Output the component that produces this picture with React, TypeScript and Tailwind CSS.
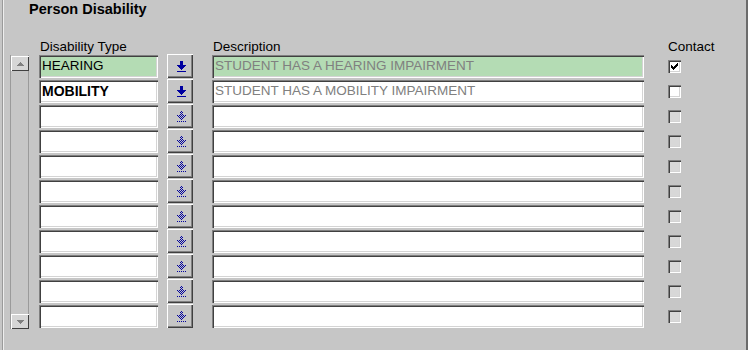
import React from "react";

const FONT = { fontFamily: '"Liberation Sans", Arial, sans-serif' };

const ARROW_ROWS: [number, number][] = [
  [3, 3],
  [3, 3],
  [3, 3],
  [3, 3],
  [0, 9],
  [1, 7],
  [2, 5],
  [3, 3],
  [4, 1],
  [0, 0],
  [0, 9],
];

function Arrow({ disabled }: { disabled: boolean }) {
  const cells: React.ReactNode[] = [];
  ARROW_ROWS.forEach(([x0, w], y) => {
    if (!disabled) {
      if (w > 0) cells.push(<rect key={y} x={x0} y={y} width={w} height={1} fill="#0000a0" />);
    } else {
      for (let x = x0; x < x0 + w; x++) {
        if ((x + y) % 2 === 0) cells.push(<rect key={`${x}-${y}`} x={x} y={y} width={1} height={1} fill="#0000a0" />);
      }
    }
  });
  return (
    <svg width="9" height="11" viewBox="0 0 9 11" shapeRendering="crispEdges">
      {cells}
    </svg>
  );
}

function Check() {
  return (
    <svg width="7" height="7" viewBox="0 0 7 7" shapeRendering="crispEdges">
      <path
        d="M6 0h1v3h-1v1h-1v1h-1v1h-1v1h-1v-1h-1v-1h-1v-3h1v1h1v1h1v-1h1v-1h1z"
        fill="#000"
      />
    </svg>
  );
}

type Row = {
  type: string;
  desc: string;
  checked: boolean;
  active: boolean;
  bold?: boolean;
  green?: boolean;
};

const rows: Row[] = [
  { type: "HEARING", desc: "STUDENT HAS A HEARING IMPAIRMENT", checked: true, active: true, green: true },
  { type: "MOBILITY", desc: "STUDENT HAS A MOBILITY IMPAIRMENT", checked: false, active: true, bold: true },
  ...Array.from({ length: 9 }, () => ({ type: "", desc: "", checked: false, active: false })),
];

const sunken =
  "shadow-[inset_1px_1px_0_#808080,inset_2px_2px_0_#404040,inset_-1px_-1px_0_#ffffff,inset_-2px_-2px_0_#d4d4d4]";

function ScrollBtn({ up }: { up: boolean }) {
  return (
    <div className="h-[15px] w-[18px] bg-[#d6d6d6] shadow-[inset_1px_1px_0_#ffffff,inset_-1px_-1px_0_#404040] flex items-center justify-center">
      <svg width="7" height="4" viewBox="0 0 7 4" shapeRendering="crispEdges">
        {up ? (
          <path d="M3 0h1v1h1v1h1v1h1v1h-7v-1h1v-1h1v-1h1z" fill="#808080" />
        ) : (
          <path d="M0 0h7v1h-1v1h-1v1h-1v1h-1v-1h-1v-1h-1v-1h-1z" fill="#808080" />
        )}
      </svg>
    </div>
  );
}

export default function App() {
  return (
    <div
      className="w-[748px] h-[350px] bg-[#c6c6c6] border-r-2 border-r-[#6b6b6b] overflow-hidden text-black"
      style={FONT}
    >
      <div className="ml-[2px] h-full border-l border-l-[#9a9a9a] shadow-[inset_1px_0_0_#eeeeee]">
        <div className="pl-[26px] pt-[1px] text-[14.5px] font-bold leading-[16px]">Person Disability</div>

        <div className="mt-[22px] flex text-[13.5px] leading-[15px]">
          <div className="ml-[37px] w-[173px]">Disability Type</div>
          <div className="w-[455px]">Description</div>
          <div>Contact</div>
        </div>

        <div className="flex">
          <div className="ml-[7px] mt-[1px] w-[19px] h-[274px] border-x border-x-[#9a9a9a] flex flex-col justify-between">
            <div className="mt-[1px]">
              <ScrollBtn up />
            </div>
            <div>
              <ScrollBtn up={false} />
            </div>
          </div>

          <div className="ml-[10px] flex flex-col">
            {rows.map((r, i) => (
              <div key={i} className="flex h-[25px] items-start">
                <div
                  className={`mt-[1px] h-[23px] w-[119px] ${r.green ? "bg-[#b4dcb4]" : "bg-white"} ${sunken} pl-[3px] flex items-center ${r.bold ? "font-bold text-[14px]" : "text-[13.5px]"}`}
                >
                  {r.type}
                </div>
                <div className="ml-[9px] h-[24px] w-[26px] bg-[#c6c6c6] shadow-[inset_1px_1px_0_#ffffff,inset_-1px_-1px_0_#404040,inset_-2px_-2px_0_#808080] flex justify-start pl-[10px] pt-[7px]">
                  <Arrow disabled={!r.active} />
                </div>
                <div
                  className={`ml-[19px] mt-[1px] h-[23px] w-[432px] ${r.green ? "bg-[#b4dcb4]" : "bg-white"} ${sunken} pl-[3px] flex items-center text-[13.5px] text-[#808080]`}
                >
                  {r.desc}
                </div>
                <div
                  className={`ml-[24px] mt-[6px] h-[13px] w-[13px] ${r.active ? "bg-white" : "bg-[#d8d8d8]"} shadow-[inset_1px_1px_0_#808080,inset_2px_2px_0_#404040,inset_-1px_-1px_0_#ffffff,inset_-2px_-2px_0_#d4d4d4] flex items-center justify-center`}
                >
                  {r.checked && <Check />}
                </div>
              </div>
            ))}
          </div>
        </div>
      </div>
    </div>
  );
}
